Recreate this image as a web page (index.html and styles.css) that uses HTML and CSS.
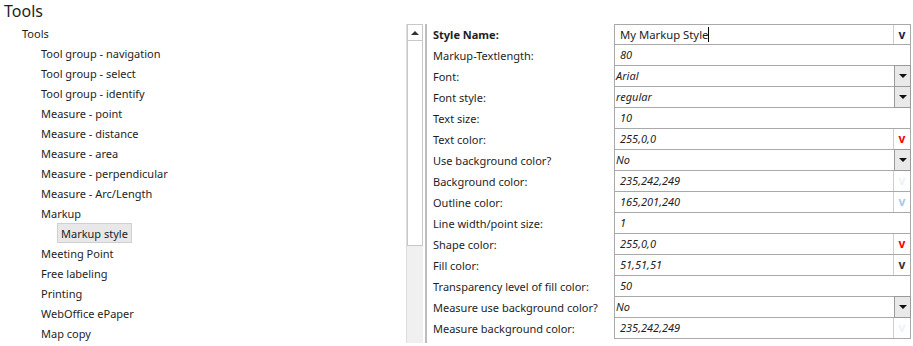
FILE: index.html
```html
<!DOCTYPE html>
<html lang="en">
<head>
    <meta charset="UTF-8">
    <title>Tools</title>
    <link rel="stylesheet" href="styles.css">
</head>
<body>

    <h1 class="title">Tools</h1>

    <div class="page">
        <!-- Tool tree -->
        <ul class="tree">
            <li class="level-1">Tools</li>
            <li class="level-2">Tool group - navigation</li>
            <li class="level-2">Tool group - select</li>
            <li class="level-2">Tool group - identify</li>
            <li class="level-2">Measure - point</li>
            <li class="level-2">Measure - distance</li>
            <li class="level-2">Measure - area</li>
            <li class="level-2">Measure - perpendicular</li>
            <li class="level-2">Measure - Arc/Length</li>
            <li class="level-2">Markup</li>
            <li class="level-3"><span class="selected">Markup style</span></li>
            <li class="level-2">Meeting Point</li>
            <li class="level-2">Free labeling</li>
            <li class="level-2">Printing</li>
            <li class="level-2">WebOffice ePaper</li>
            <li class="level-2">Map copy</li>
        </ul>

        <!-- Scrollbar -->
        <div class="scrollbar">
            <div class="scroll-up"><span class="arrow-up"></span></div>
            <div class="scroll-thumb"></div>
        </div>

        <!-- Property grid -->
        <div class="grid">
            <div class="row">
                <div class="label bold">Style Name:</div>
                <div class="value first">
                    <span class="text plain">My Markup Style<span class="caret"></span></span>
                    <span class="btn-v">v</span>
                </div>
            </div>
            <div class="row">
                <div class="label">Markup-Textlength:</div>
                <div class="value"><span class="text">80</span></div>
            </div>
            <div class="row">
                <div class="label">Font:</div>
                <div class="value select"><span class="text">Arial</span><span class="btn-drop"><span class="arrow-down"></span></span></div>
            </div>
            <div class="row">
                <div class="label">Font style:</div>
                <div class="value select"><span class="text">regular</span><span class="btn-drop"><span class="arrow-down"></span></span></div>
            </div>
            <div class="row">
                <div class="label">Text size:</div>
                <div class="value"><span class="text">10</span></div>
            </div>
            <div class="row">
                <div class="label">Text color:</div>
                <div class="value"><span class="text">255,0,0</span><span class="btn-v" style="color: rgb(255,0,0)">v</span></div>
            </div>
            <div class="row">
                <div class="label">Use background color?</div>
                <div class="value select"><span class="text">No</span><span class="btn-drop"><span class="arrow-down"></span></span></div>
            </div>
            <div class="row">
                <div class="label">Background color:</div>
                <div class="value"><span class="text">235,242,249</span><span class="btn-v" style="color: rgb(235,242,249)">v</span></div>
            </div>
            <div class="row">
                <div class="label">Outline color:</div>
                <div class="value"><span class="text">165,201,240</span><span class="btn-v" style="color: rgb(165,201,240)">v</span></div>
            </div>
            <div class="row">
                <div class="label">Line width/point size:</div>
                <div class="value"><span class="text">1</span></div>
            </div>
            <div class="row">
                <div class="label">Shape color:</div>
                <div class="value"><span class="text">255,0,0</span><span class="btn-v" style="color: rgb(255,0,0)">v</span></div>
            </div>
            <div class="row">
                <div class="label">Fill color:</div>
                <div class="value"><span class="text">51,51,51</span><span class="btn-v" style="color: rgb(51,51,51)">v</span></div>
            </div>
            <div class="row">
                <div class="label">Transparency level of fill color:</div>
                <div class="value"><span class="text">50</span></div>
            </div>
            <div class="row">
                <div class="label">Measure use background color?</div>
                <div class="value select"><span class="text">No</span><span class="btn-drop"><span class="arrow-down"></span></span></div>
            </div>
            <div class="row">
                <div class="label">Measure background color:</div>
                <div class="value"><span class="text">235,242,249</span><span class="btn-v" style="color: rgb(235,242,249)">v</span></div>
            </div>
        </div>
    </div>

</body>
</html>
```

FILE: styles.css
```css
:root {
    --text: #1e1e1e;
    --border: #a9a9a9;
    --button: #e9e9e9;
    --track: #f0f0f0;
}

* {
    margin: 0;
    padding: 0;
    box-sizing: border-box;
}

body {
    font-family: 'Noto Sans', 'Open Sans', sans-serif;
    font-size: 11px;
    color: var(--text);
    background: #fff;
    width: 913px;
    height: 346px;
    overflow: hidden;
}

.title {
    font-size: 16px;
    font-weight: normal;
    height: 23px;
    line-height: 22px;
    padding-left: 4px;
}

.page {
    display: flex;
}

/* tree */

.tree {
    list-style: none;
    width: 406px;
}

.tree li {
    height: 20px;
    line-height: 21px;
    white-space: nowrap;
}

.level-1 {
    padding-left: 22px;
}

.level-2 {
    padding-left: 41px;
}

.level-3 {
    padding-left: 57px;
}

.selected {
    display: inline-block;
    height: 20px;
    line-height: 19px;
    padding: 0 3px;
    background: #e8e8e8;
    border: 1px solid #d0d0d0;
}

/* scrollbar */

.scrollbar {
    width: 17px;
    margin-top: 1px;
    background: var(--track);
    border-left: 1px solid #dcdcdc;
    display: flex;
    flex-direction: column;
}

.scroll-up {
    height: 17px;
    background: #fff;
    border: 1px solid #c8c8c8;
    display: flex;
    justify-content: center;
    align-items: center;
}

.arrow-up {
    width: 0;
    height: 0;
    border-left: 4px solid transparent;
    border-right: 4px solid transparent;
    border-bottom: 4px solid #333;
}

.scroll-thumb {
    height: 205px;
    background: #fff;
    border: 1px solid #c8c8c8;
    border-top: none;
}

/* property grid */

.grid {
    margin-left: 2px;
    margin-top: 1px;
    border-left: 2px solid #bdbdbd;
    padding-left: 6px;
    flex: 1;
}

.row {
    display: flex;
    height: 21px;
}

.label {
    width: 181px;
    line-height: 22px;
    white-space: nowrap;
}

.label.bold {
    font-weight: bold;
}

.value {
    width: 297px;
    display: flex;
    border: 1px solid var(--border);
    border-top: none;
    background: #fff;
}

.value.first {
    border-top: 1px solid var(--border);
}

.text {
    flex: 1;
    font-style: italic;
    padding-left: 5px;
    line-height: 20px;
    white-space: nowrap;
}

.text.plain {
    font-style: normal;
    font-size: 11.3px;
}

.select .text {
    padding-left: 1px;
}

.caret {
    display: inline-block;
    width: 1px;
    height: 15px;
    background: #000;
    vertical-align: -3px;
}

.btn-v {
    width: 17px;
    border-left: 1px solid #cfcfcf;
    text-align: center;
    font-weight: bold;
    line-height: 19px;
    font-size: 12px;
}

.first .btn-v {
    color: #1c1c4a;
}

.btn-drop {
    width: 17px;
    background: var(--button);
    border: 1px solid #9a9a9a;
    margin: -1px -1px -1px 0;
    display: flex;
    justify-content: center;
    align-items: center;
}

.arrow-down {
    width: 0;
    height: 0;
    border-left: 4px solid transparent;
    border-right: 4px solid transparent;
    border-top: 4px solid #111;
}
```
